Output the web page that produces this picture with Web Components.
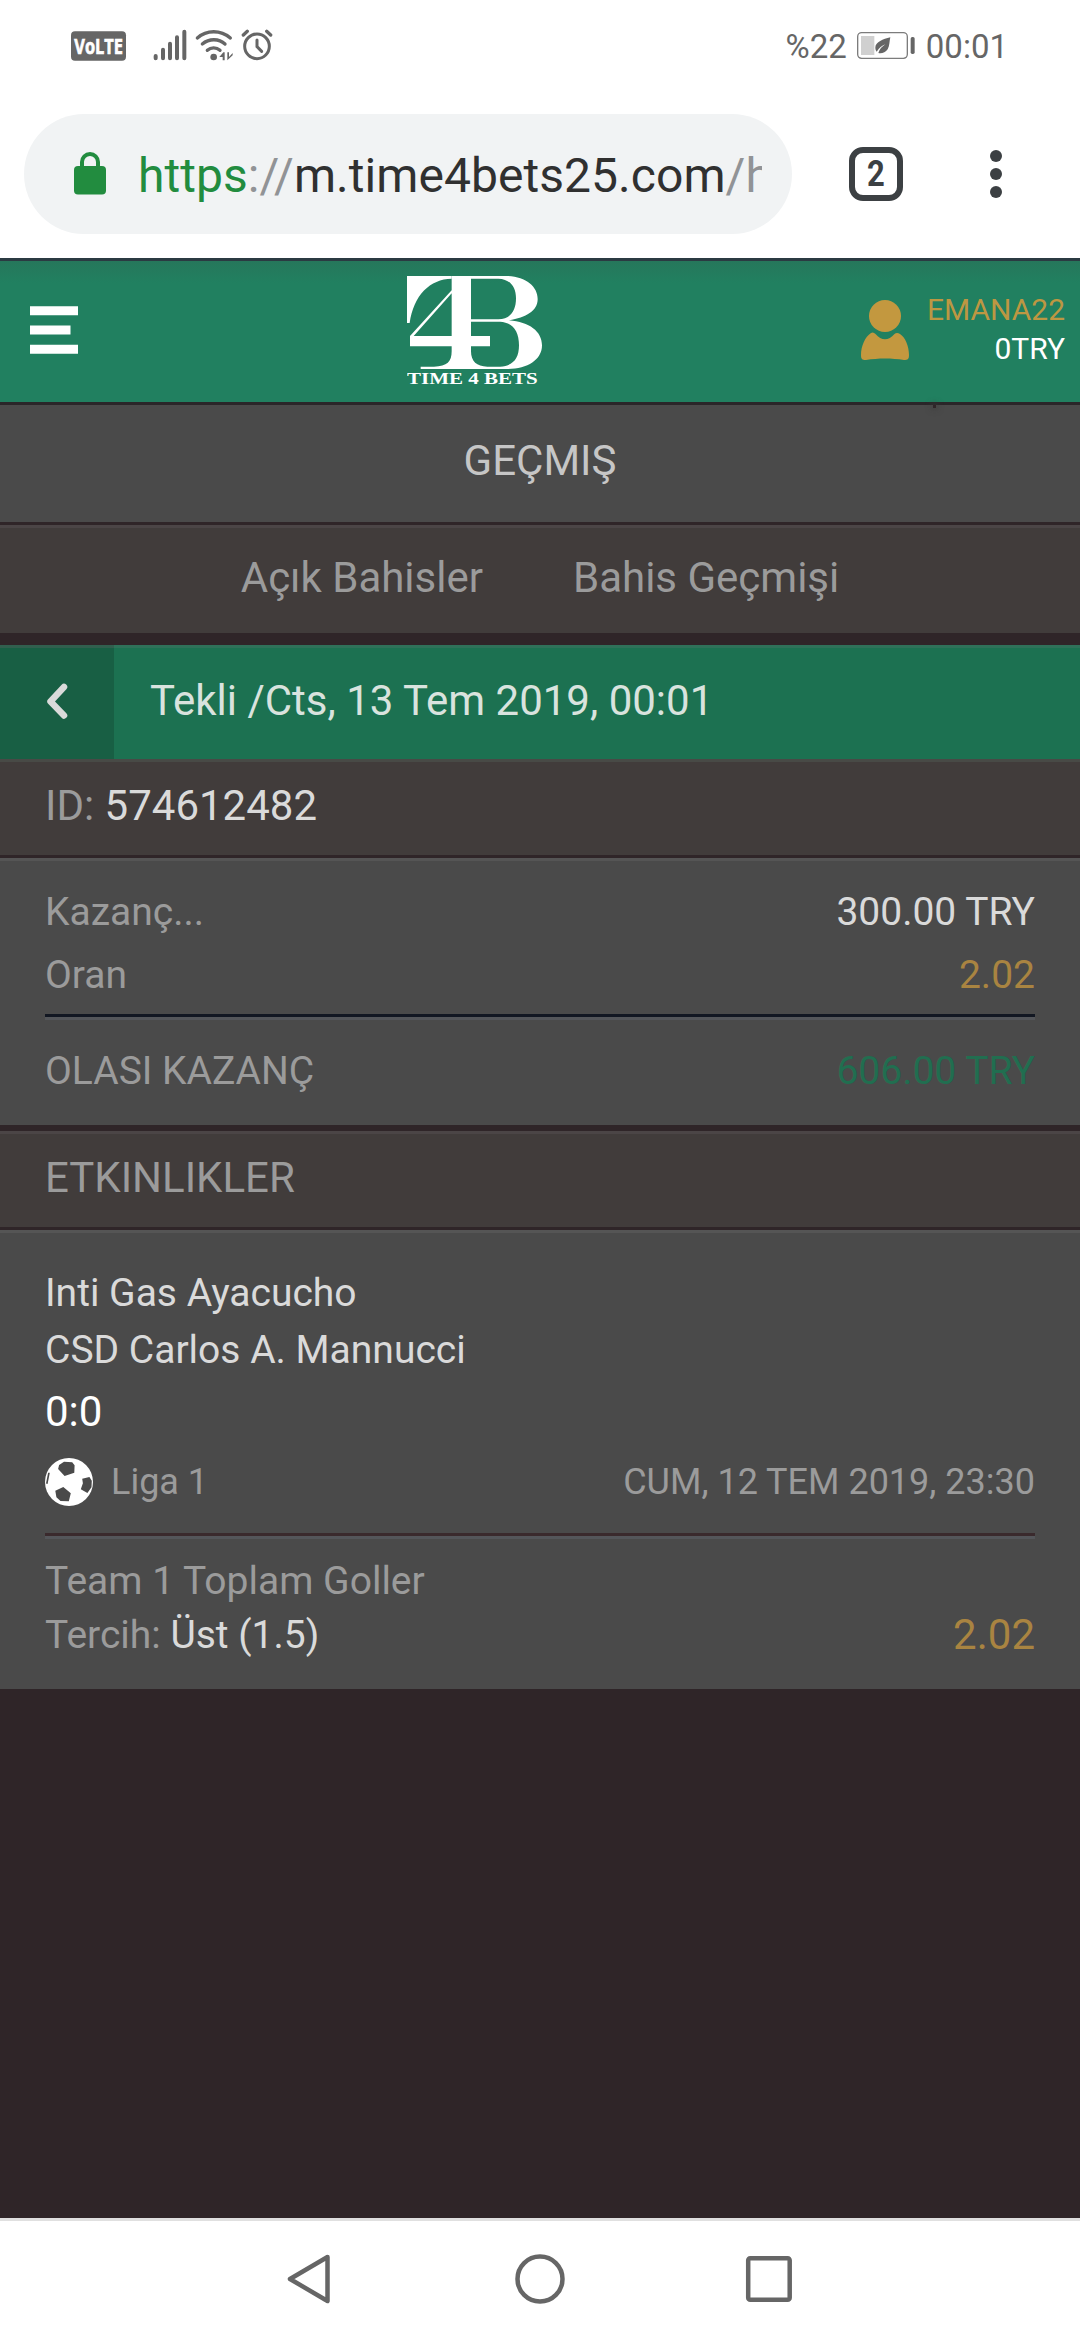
<!DOCTYPE html>
<html lang="tr">
<head>
<meta charset="utf-8">
<title>Time4Bets</title>
<style>
html,body{margin:0;padding:0}
body{width:1080px;height:2340px;overflow:hidden;background:#2f2528;font-family:Roboto,sans-serif}
</style>
</head>
<body>
<phone-screen></phone-screen>
<script>
const define = (name, html) => {
  const t = document.createElement('template');
  t.innerHTML = '<style>:host{display:block;box-sizing:border-box}*{box-sizing:border-box}svg{display:block;flex:none}</style>' + html;
  customElements.define(name, class extends HTMLElement {
    constructor() {
      super();
      this.attachShadow({mode: 'open'}).appendChild(t.content.cloneNode(true));
    }
  });
};

define('status-bar', `
<style>
:host{display:flex;justify-content:space-between;height:90px;padding:0 72px 0 71px;background:#fff;color:#666;font-size:33px;line-height:93px}
.side{display:flex;align-items:flex-start;height:90px}
svg{margin-top:10px}
</style>
<div class="side">
  <svg width="210" height="80" viewBox="93 0 630 240" fill="#666">
    <rect x="93" y="64" width="165" height="88" rx="12"/>
    <text x="103" y="131" font-family="Open Sans,sans-serif" font-weight="700" font-size="62" textLength="146" lengthAdjust="spacingAndGlyphs" fill="#fff" stroke="#fff" stroke-width="2">VoLTE</text>
    <g stroke="#666" stroke-width="12" stroke-linecap="round" fill="none">
      <path d="M347 138v7M369 119v26M390 101v44M411 82v63M433 65v80"/>
      <path d="M472 84c28-25 70-25 99 0M487 102c20-17 50-17 68 0M502 121c11-10 27-10 38 0" stroke-width="10"/>
      <circle cx="651" cy="109" r="37" stroke-width="9"/>
      <path d="M651 90v20l14 14" stroke-width="9"/>
      <path d="M610 75l12-11M680 64l12 11" stroke-width="10"/>
    </g>
    <circle cx="521" cy="141" r="10"/>
    <path d="M538 141l12-14h4v24h-6v-10zM562 151v-24h5v14l11-12v7z"/>
  </svg>
</div>
<div class="side">
  <span>%22</span>
  <svg width="58" height="80" viewBox="294 0 174 240" style="margin-left:10px;margin-right:11px">
    <rect x="296" y="68" width="149" height="77" rx="12" fill="none" stroke="#7c7c7c" stroke-width="4"/>
    <path d="M306 78h40v57h-40z" fill="#d0d0d0"/>
    <path d="M394 82c-22 5-44 14-45 30 0 6 1 10 4 13 8-12 15-17 26-22-11 8-17 14-21 26 10 3 21-2 28-11 6-10 5-24 8-36z" fill="#666"/>
    <rect x="455" y="81" width="12" height="51" rx="5" fill="#666"/>
  </svg>
  <span>00:01</span>
</div>`);

define('address-bar', `
<style>
:host{display:flex;height:168px;padding:24px 0 0 24px;background:#fff}
.pill{display:flex;width:768px;height:120px;border-radius:60px;background:#f1f3f4;padding-left:50px}
.lock{margin-top:37px}
.url{width:624px;margin-left:32px;overflow:hidden;white-space:nowrap;font-size:48px;letter-spacing:.05px;line-height:124px;height:120px;color:#303030}
.s{color:#228c3f}.g{color:#919396}
.tabs{width:54px;height:54px;border:6px solid #3c4043;border-radius:14px;margin:33px 0 0 57px;font-weight:700;font-size:36px;line-height:42px;color:#3c4043;text-align:center}
.tabs span{display:block;transform:scaleX(.86)}
.menu{margin:36px 0 0 87px}
</style>
<div class="pill">
  <svg class="lock" width="32" height="44" viewBox="0 0 32 44"><rect y="15" width="32" height="28.5" rx="4" fill="#228c3f"/><path d="M8 17V11a8 8 0 0 1 16 0v6" fill="none" stroke="#228c3f" stroke-width="4"/></svg>
  <div class="url"><span class="s">https</span><span class="g">://</span>m.time4bets25.com<span class="g">/h</span></div>
</div>
<div class="tabs"><span>2</span></div>
<svg class="menu" width="12" height="48" fill="#3c4043"><circle cx="6" cy="6" r="6"/><circle cx="6" cy="24" r="6"/><circle cx="6" cy="42" r="6"/></svg>`);

define('brand-logo', `
<svg width="135" height="112" viewBox="111 78 405 336" fill="#fff">
  <path d="M111 78H245V86C180 87 131 135 119 219H111Z"/>
  <path fill-rule="evenodd" d="M245 78H412C468 80 503 110 503 147C503 183 468 202 417 211C478 216 516 244 516 286C516 330 472 357 412 357H152V350H192C232 349 245 335 245 304V289H120V258L245 121ZM245 130L131 258H245ZM303 86V208H385C422 207 438 182 438 145C438 110 420 87 385 86ZM303 215V258H360V289H303V304C303 334 320 350 352 350H390C430 348 447 325 447 286C447 243 428 217 390 215Z"/>
  <text x="111" y="402" font-family="Liberation Serif,serif" font-weight="700" font-size="51" textLength="392" lengthAdjust="spacingAndGlyphs">TIME 4 BETS</text>
</svg>`);

define('site-header', `
<style>
:host{display:flex;height:147px;border-top:3px solid #2b3a42;border-bottom:3px solid #2a2629;background:linear-gradient(#26775b,#218060 22px);padding:0 15px 0 30px}
.side{width:377px;display:flex}
.menu{margin-top:45px}
brand-logo{margin-top:15px}
.user{flex:1;justify-content:flex-end}
.user svg{margin:38px 18px 0 0}
.t{padding-top:29px;text-align:right;font-size:30px;line-height:39px;color:#fff}
.n{color:#bd9742}
</style>
<div class="side"><svg class="menu" width="48" height="49" fill="#fff"><path d="M0 .3h48v9H0zM0 19.5h40.500v9H0zM0 38.700h48v9H0z"/></svg></div>
<brand-logo></brand-logo>
<div class="side user">
  <svg width="48" height="61" viewBox="0 0 48 61" fill="#c3983f"><circle cx="24" cy="17" r="16"/><path d="M10 34C4 38 0 47 0 56c0 4 1 5 5 5 12-2 26-2 38 0 4 0 5-1 5-5 0-9-4-18-9-21-2-1.500-4-1.500-5.500 0-6 7-13 7-19 0-1.500-1.500-3-2-4.500-1z"/></svg>
  <div class="t"><div class="n">EMANA22</div><div>0TRY</div></div>
</div>`);

define('page-title', `
<style>:host{height:117px;background:#4a4a4a;color:#c6c6c6;font-size:42px;line-height:111px;text-align:center}
i{display:block;width:3px;height:3px;margin-left:933px;margin-bottom:-3px;background:#2f2528;box-shadow:0 0 6px 1px #3b3b3b}</style>
<i></i><slot></slot>`);

define('tab-links', `
<style>:host{display:flex;justify-content:center;gap:90px;height:108px;margin:3px 0 12px;background:#413c3b;color:#9b9b9b;border-top:3px solid #4b4546;font-size:42px;line-height:99px}</style>
<slot></slot>`);

define('coupon-title', `
<style>
:host{display:flex;height:114px;background:#1c7151;color:#d9e3de;font-size:42px;line-height:105px}
.back{width:114px;height:114px;background:#185f44;padding:35px 0 0 46px;border-top:3px solid #315f4e}
.txt{flex:1;padding-left:36px;border-top:3px solid #2f7159}
</style>
<div class="back"><svg width="24" height="38" viewBox="0 0 24 38"><path d="M18 4L4.500 18.500 18 32.500" fill="none" stroke="#dadada" stroke-width="6.500" stroke-linecap="round" stroke-linejoin="round"/></svg></div>
<div class="txt"><slot></slot></div>`);

define('section-bar', `
<style>
:host{height:96px;background:#413c3b;border-top:3px solid var(--edge,#4b4546);padding-left:45px;font-size:42px;line-height:87px;color:#9b9b9b}
::slotted(b){font-weight:400;color:#dadada}
</style><slot></slot>`);

define('data-row', `
<style>
:host{display:flex;justify-content:space-between;font-size:39px;line-height:var(--h,63px);height:var(--h,63px);color:#9b9b9b}
::slotted(b){font-weight:400;color:#dadada}
.v{color:var(--c,#dadada);font-size:var(--fs,39px)}
</style>
<span><slot></slot></span><span class="v"><slot name="value"></slot></span>`);

define('rule-line', `<style>:host{height:6px;background:#54565a;border-top:3px solid var(--line,#121722)}</style>`);

define('grey-panel', `<style>:host{background:#4a4a4a;border-top:3px solid #555;padding:0 45px;margin-top:3px}</style><slot></slot>`);

define('match-card', `
<style>
:host{padding-top:32px;color:#dadada;font-size:39px;line-height:57px}
.score{color:#fff;font-size:42px;line-height:66px}
.meta{display:flex;align-items:center;height:48px;margin:13px 0 27px;font-size:36px;line-height:48px;color:#9b9b9b}
.meta svg{margin-right:18px}
.date{margin-left:auto}
</style>
<div>Inti Gas Ayacucho</div>
<div>CSD Carlos A. Mannucci</div>
<div class="score">0:0</div>
<div class="meta">
<svg width="48" height="48" viewBox="0 0 48 48"><circle cx="24" cy="24" r="24" fill="#fff"/><path fill="#4a4a4a" d="M19 3.700L27.200 4.300 29.600 7.300 29.300 14.700 19.600 18 13.100 11 14.100 7ZM37.200 20.700L44.400 19 46.800 22.700 46.500 29.300 42.400 35 35.800 31.300 37.900 25.300ZM10.300 32.700L18.300 29 25.800 35.300 23.800 43.300 15.500 43 11.400 39.300ZM3.100 14.700H4.800L2.600 26 1 25.500Z"/></svg>
<span>Liga 1</span><span class="date">CUM, 12 TEM 2019, 23:30</span>
</div>`);

define('nav-bar', `
<style>:host{display:flex;height:122px;background:#fff;border-top:3px solid #e0e0e0;padding:32px 0 0 286px}
svg+svg{margin-left:184px}svg:last-child{margin-left:180px}</style>
<svg width="45" height="52" fill="none" stroke="#666" stroke-width="4.500" stroke-linejoin="round"><path d="M41.500 4L4 26 41.500 48Z"/></svg>
<svg width="50" height="52" fill="none" stroke="#666" stroke-width="4.500"><circle cx="25" cy="26" r="22.500"/></svg>
<svg width="48" height="52" fill="none" stroke="#666" stroke-width="4.500"><rect x="3.200" y="5.200" width="41.500" height="41.500" rx="2"/></svg>`);

define('phone-screen', `
<style>
:host{display:flex;flex-direction:column;width:1080px;height:2340px}
nav-bar{margin-top:auto}
</style>
<status-bar></status-bar>
<address-bar></address-bar>
<site-header></site-header>
<page-title>GEÇMIŞ</page-title>
<tab-links><span>Açık Bahisler</span><span>Bahis Geçmişi</span></tab-links>
<coupon-title>Tekli /Cts, 13 Tem 2019, 00:01</coupon-title>
<section-bar style="--edge:#484a46">ID: <b>574612482</b></section-bar>
<grey-panel style="height:267px;padding-top:20px">
  <data-row>Kazanç...<span slot="value">300.00 TRY</span></data-row>
  <data-row style="--c:#a98441">Oran<span slot="value">2.02</span></data-row>
  <rule-line style="margin-top:7px"></rule-line>
  <data-row style="--h:103px;--c:#216e50">OLASI KAZANÇ<span slot="value">606.00 TRY</span></data-row>
</grey-panel>
<section-bar style="margin-top:6px">ETKINLIKLER</section-bar>
<grey-panel style="height:459px">
  <match-card></match-card>
  <rule-line style="--line:#3a2a2d"></rule-line>
  <data-row style="--h:54px;margin-top:15px">Team 1 Toplam Goller</data-row>
  <data-row style="--h:54px;--c:#a98441;--fs:42px"><span>Tercih: </span><b>Üst (1.5)</b><span slot="value">2.02</span></data-row>
</grey-panel>
<nav-bar></nav-bar>`);
</script>
</body>
</html>
